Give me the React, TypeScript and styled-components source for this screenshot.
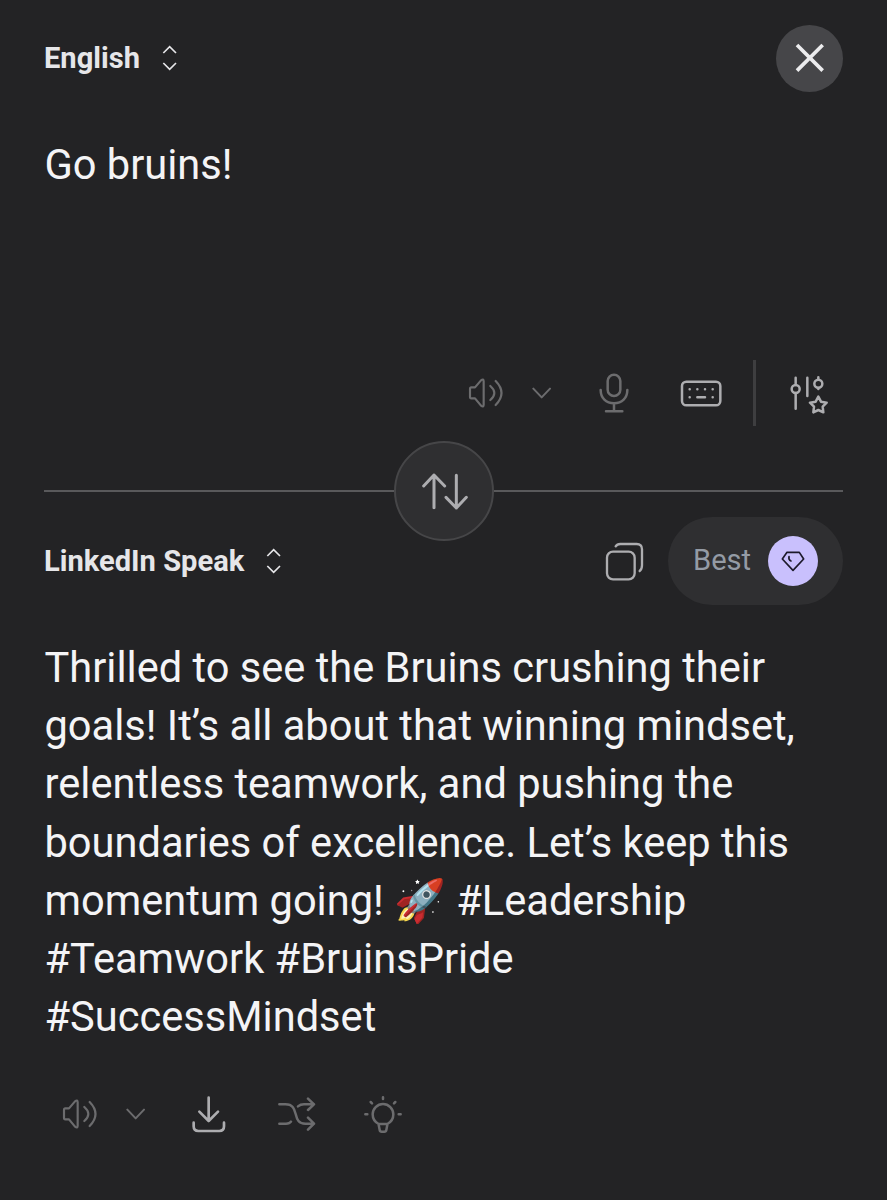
import React from 'react';
import styled, { createGlobalStyle } from 'styled-components';

const GlobalStyle = createGlobalStyle`
  * { box-sizing: border-box; }
  body { margin: 0; background: #232325; }
  button { border: 0; padding: 0; background: none; color: inherit; font: inherit; }
  svg { display: block; flex: none; }
`;

const Page = styled.main`
  width: 887px;
  height: 1200px;
  padding: 25px 44px 0;
  display: flex;
  flex-direction: column;
  overflow: hidden;
  background: #232325;
  color: #f4f4f6;
  font-family: Roboto, 'Liberation Sans', 'Noto Color Emoji', sans-serif;
`;

const Header = styled.header<{ $height: number }>`
  height: ${(p) => p.$height}px;
  flex: none;
  display: flex;
  align-items: center;
  justify-content: space-between;
`;

const LanguageButton = styled.button`
  display: flex;
  align-items: center;
  gap: 22px;
  color: #e6e6e9;
  font-size: 29.1px;
  font-weight: 700;
  line-height: 40px;
  white-space: nowrap;
`;

const CloseButton = styled.button`
  width: 67px;
  height: 67px;
  border-radius: 50%;
  display: flex;
  align-items: center;
  justify-content: center;
  background: #464649;
  color: #ececee;
`;

const Text = styled.p<{ $top: number; $height: number }>`
  height: ${(p) => p.$height}px;
  flex: none;
  margin: ${(p) => p.$top}px 0 0;
  padding-left: 0.5px;
  font-size: 41.6px;
  line-height: 58.2px;
`;

const Toolbar = styled.div<{ $align: string; $top: number }>`
  height: 66px;
  flex: none;
  margin-top: ${(p) => p.$top}px;
  padding: 0 15px 0 18px;
  display: flex;
  align-items: center;
  justify-content: ${(p) => p.$align};
`;

const Tool = styled.button<{ $bright?: boolean; $gap?: number; $drop?: number }>`
  margin-left: ${(p) => p.$gap ?? 0}px;
  padding-top: ${(p) => p.$drop ?? 0}px;
  color: ${(p) => (p.$bright ? '#adadb0' : '#6c6c6e')};
`;

const Separator = styled.span`
  width: 3px;
  height: 66px;
  margin-left: 31px;
  background: #3e3e40;
`;

const SwapRow = styled.div`
  height: 100px;
  flex: none;
  margin: 15px 0 0;
  display: flex;
  align-items: center;
`;

const Rule = styled.span`
  flex: 1;
  height: 2px;
  background: #59595b;
`;

const SwapButton = styled.button`
  width: 100px;
  height: 100px;
  border: 2px solid #464648;
  border-radius: 50%;
  display: flex;
  align-items: center;
  justify-content: center;
  background: #2f2f31;
  color: #adadb0;
`;

const Actions = styled.div`
  display: flex;
  align-items: center;
  gap: 24px;
  color: #adadb0;
`;

const QualityPill = styled.button`
  width: 175px;
  height: 88px;
  padding: 0 25px;
  border-radius: 44px;
  display: flex;
  align-items: center;
  justify-content: space-between;
  background: #2f2f31;
  color: #949ba5;
  font-size: 29.1px;
`;

const PillLabel = styled.span`
  padding-bottom: 2px;
`;

const Gem = styled.span`
  width: 50px;
  height: 50px;
  border-radius: 50%;
  display: flex;
  align-items: center;
  justify-content: center;
  background: #c9c0fd;
  color: #1d1a2b;
`;

type DrawingProps = { w: number; h: number; stroke?: number; children: React.ReactNode };

/* Icons are drawn on a grid three times finer than their size on the page. */
const Drawing = ({ w, h, stroke = 7.5, children }: DrawingProps) => (
  <svg width={w} height={h} viewBox={`0 0 ${w * 3} ${h * 3}`} fill="none" stroke="currentColor"
    strokeWidth={stroke} strokeLinecap="round" strokeLinejoin="round" aria-hidden="true">
    {children}
  </svg>
);

const UpDown = () => (
  <Drawing w={16} h={26} stroke={5}>
    <path d="M4 24 23 5 42 24M4 54 23 73 42 54" strokeLinecap="butt" strokeLinejoin="miter" />
  </Drawing>
);

const Close = () => (
  <Drawing w={30} h={30} stroke={11}>
    <path d="M6 6 83 83M83 6 6 83" strokeLinecap="butt" />
  </Drawing>
);

const Speaker = () => (
  <Drawing w={36} h={32} stroke={6.5}>
    <path d="M10 31H21L39 10Q47 4 47 13V83Q47 92 39 86L21 64H10Q6 64 6 59V36Q6 31 10 31Z" />
    <path d="M67 27Q91 48 67 69M83 12Q118 48 83 84" />
  </Drawing>
);

const Chevron = () => (
  <Drawing w={20} h={12} stroke={6}>
    <path d="M4 5 29 31 54 5" />
  </Drawing>
);

const Mic = () => (
  <Drawing w={30} h={40}>
    <rect x="26" y="5" width="38" height="64" rx="19" />
    <path d="M5 51C5 75 21 91 45 91S85 75 85 51M45 91V115M21 115H70" />
  </Drawing>
);

const Keyboard = () => (
  <Drawing w={42} h={27}>
    <rect x="6" y="5" width="115" height="71" rx="13" />
    <path d="M29 28H29.1M52 28H52.1M75 28H75.1M98 28H98.1M29 52H29.1M98 52H98.1M52 52H75" />
  </Drawing>
);

const Tune = () => (
  <Drawing w={38} h={38}>
    <path d="M17 5V27M17 51V98M52 5V60M85 4V11M85 36V39" />
    <circle cx="17" cy="39" r="12" />
    <circle cx="85" cy="23" r="12" />
    <path d="M85 62 93 77 110 80 98 92 100 109 85 102 70 109 72 92 60 80 77 77Z" />
  </Drawing>
);

const Swap = () => (
  <Drawing w={48} h={38} stroke={9}>
    <path d="M42 107V9M11 42 42 9 74 42M109 10V108M78 76 109 108 139 76" />
  </Drawing>
);

const Copy = () => (
  <Drawing w={39} h={39} stroke={7}>
    <rect x="6" y="29" width="83" height="83" rx="18" />
    <path d="M32 13Q36 6 46 6H95Q111 6 111 22V70Q111 82 104 87" />
  </Drawing>
);

const Diamond = () => (
  <Drawing w={24} h={21} stroke={5}>
    <path d="M18 4H55L68 24 36 58 4 24Z" />
    <path d="M24 17Q22 27 30 30" />
  </Drawing>
);

const Download = () => (
  <Drawing w={34} h={37} stroke={8}>
    <path d="M50 5V75M22 47 50 75 78 47M5 80V91Q5 105 19 105H82Q96 105 96 91V80" />
  </Drawing>
);

const Shuffle = () => (
  <Drawing w={38} h={35}>
    <path d="M4 22H22C45 22 49 36 53 51C57 68 62 80 82 80H108M4 80H24Q35 80 39 74M60 28Q67 22 78 22H108M90 5 108 22 90 39M90 62 108 80 90 98" />
  </Drawing>
);

const Bulb = () => (
  <Drawing w={38} h={37}>
    <path d="M44 84C30 77 26 67 26 55A31 31 0 0 1 88 55C88 67 84 77 70 84ZM44 86 47 102Q48 107 53 107H61Q66 107 67 102L70 86" />
    <path d="M57 4V9M20 18 24 22M94 18 90 22M4 55H10M104 55H110" />
  </Drawing>
);

export default function App() {
  return (
    <Page>
      <GlobalStyle />
      <Header $height={66}>
        <LanguageButton>English<UpDown /></LanguageButton>
        <CloseButton aria-label="Clear"><Close /></CloseButton>
      </Header>
      <Text $top={45} $height={59}>Go bruins!</Text>
      <Toolbar $align="flex-end" $top={165}>
        <Tool><Speaker /></Tool>
        <Tool $gap={28}><Chevron /></Tool>
        <Tool $gap={47}><Mic /></Tool>
        <Tool $gap={51} $bright><Keyboard /></Tool>
        <Separator />
        <Tool $gap={34} $drop={4} $bright><Tune /></Tool>
      </Toolbar>
      <SwapRow>
        <Rule />
        <SwapButton aria-label="Swap languages"><Swap /></SwapButton>
        <Rule />
      </SwapRow>
      <Header $height={40}>
        <LanguageButton>LinkedIn Speak<UpDown /></LanguageButton>
        <Actions>
          <Copy />
          <QualityPill><PillLabel>Best</PillLabel><Gem><Diamond /></Gem></QualityPill>
        </Actions>
      </Header>
      <Text $top={58} $height={408}>
        Thrilled to see the Bruins crushing their goals! It’s all about that winning mindset,
        relentless teamwork, and pushing the boundaries of excellence. Let’s keep this momentum
        going! 🚀 #Leadership #Teamwork #BruinsPride #SuccessMindset
      </Text>
      <Toolbar $align="flex-start" $top={34}>
        <Tool><Speaker /></Tool>
        <Tool $gap={28}><Chevron /></Tool>
        <Tool $gap={46} $bright><Download /></Tool>
        <Tool $gap={52}><Shuffle /></Tool>
        <Tool $gap={48}><Bulb /></Tool>
      </Toolbar>
    </Page>
  );
}
